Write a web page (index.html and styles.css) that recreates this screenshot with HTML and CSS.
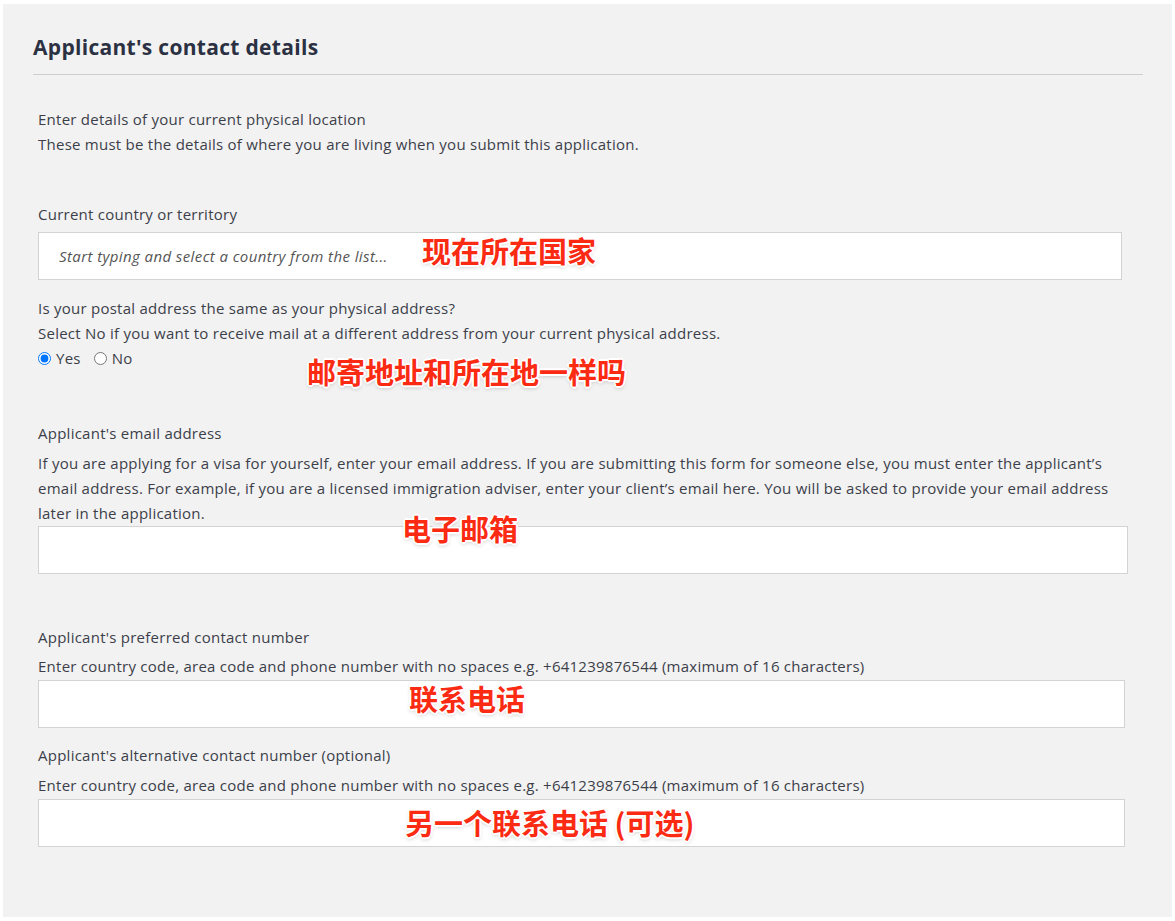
FILE: index.html
```
<!DOCTYPE html>
<html lang="en">
<head>
  <meta charset="UTF-8" />
  <title>Applicant's contact details</title>
  <link rel="stylesheet" href="styles.css">
</head>
<body>
  <div class="panel">
    <h2 class="section-title">Applicant's contact details</h2>

    <div class="form">
      <div class="intro">
        <p>Enter details of your current physical location</p>
        <p>These must be the details of where you are living when you submit this application.</p>
      </div>

      <div class="field field-country">
        <label>Current country or territory</label>
        <input type="text" class="text-input w-country" placeholder="Start typing and select a country from the list..." />
      </div>

      <div class="field field-postal">
        <label>Is your postal address the same as your physical address?</label>
        <p class="hint tight">Select No if you want to receive mail at a different address from your current physical address.</p>
        <div class="radios">
          <label class="radio"><input type="radio" name="postal" checked /> Yes</label>
          <label class="radio"><input type="radio" name="postal" /> No</label>
        </div>
      </div>

      <div class="field field-email">
        <label>Applicant's email address</label>
        <p class="hint">If you are applying for a visa for yourself, enter your email address. If you are submitting this form for someone else, you must enter the applicant’s email address. For example, if you are a licensed immigration adviser, enter your client’s email here. You will be asked to provide your email address later in the application.</p>
        <input type="text" class="text-input w-email" />
      </div>

      <div class="field field-phone">
        <label>Applicant's preferred contact number</label>
        <p class="hint">Enter country code, area code and phone number with no spaces e.g. +641239876544 (maximum of 16 characters)</p>
        <input type="text" class="text-input w-phone" />
      </div>

      <div class="field field-alt">
        <label>Applicant's alternative contact number (optional)</label>
        <p class="hint">Enter country code, area code and phone number with no spaces e.g. +641239876544 (maximum of 16 characters)</p>
        <input type="text" class="text-input w-phone" />
      </div>
    </div>

    <!-- annotations drawn over the form -->
    <span class="note note-country">现在所在国家</span>
    <span class="note note-postal">邮寄地址和所在地一样吗</span>
    <span class="note note-email">电子邮箱</span>
    <span class="note note-phone">联系电话</span>
    <span class="note note-alt">另一个联系电话 (可选)</span>
  </div>
</body>
</html>
```

FILE: styles.css
```
* {
  margin: 0;
  padding: 0;
  box-sizing: border-box;
}
body {
  background: #fff;
  font-family: 'Open Sans', 'Noto Sans', sans-serif;
  color: #3c3f4a;
}
.panel {
  position: relative;
  margin: 4px 3px 0 3px;
  height: 913px;
  background: #f2f2f2;
  padding: 0 29px 0 30px;
}
.section-title {
  padding-top: 31px;
  padding-bottom: 15px;
  font-size: 21px;
  line-height: 24px;
  font-weight: 700;
  letter-spacing: 0.3px;
  color: #2b3142;
  border-bottom: 1px solid #cdcdcd;
}
.form {
  padding-left: 5px;
  font-size: 15px;
  line-height: 25px;
  letter-spacing: 0.25px;
}
.intro {
  margin-top: 32px;
}
.field label {
  display: block;
}
.hint {
  margin-top: 5px;
}
.hint.tight {
  margin-top: 0;
}
.field-country {
  margin-top: 45px;
}
.field-country .text-input {
  margin-top: 5px;
}
.field-postal {
  margin-top: 16px;
}
.field-email {
  margin-top: 50px;
}
.field-phone {
  margin-top: 51px;
}
.field-phone .hint {
  margin-top: 4px;
}
.field-alt {
  margin-top: 15px;
}
.text-input {
  display: block;
  height: 48px;
  margin-top: 1px;
  background: #fff;
  border: 1px solid #d3d3d3;
  padding: 0 20px;
  font-family: inherit;
  font-size: 15px;
  letter-spacing: 0.4px;
  color: #333;
  outline: none;
}
.w-email {
  margin-top: 0;
}
.text-input::placeholder {
  font-style: italic;
  color: #555;
}
.w-country {
  width: 1084px;
}
.w-email {
  width: 1090px;
}
.w-phone {
  width: 1087px;
}
.radios {
  display: flex;
  gap: 13px;
}
.field .radio {
  display: flex;
  align-items: center;
  gap: 5px;
}
.radio input {
  margin: 0;
  width: 13px;
  height: 13px;
}
.note {
  position: absolute;
  font-family: 'Noto Sans CJK SC', sans-serif;
  font-size: 29px;
  font-weight: 700;
  line-height: 1;
  color: #fb2a12;
  text-shadow:
    -2px 0 0 #fff, 2px 0 0 #fff, 0 -2px 0 #fff, 0 2px 0 #fff,
    -1px -1px 0 #fff, 1px 1px 0 #fff, -1px 1px 0 #fff, 1px -1px 0 #fff,
    0 2px 4px rgba(0,0,0,0.25);
}
.note-country {
  left: 419px;
  top: 232px;
}
.note-postal {
  left: 304px;
  top: 353px;
}
.note-email {
  left: 399px;
  top: 510px;
}
.note-phone {
  left: 406px;
  top: 680px;
}
.note-alt {
  left: 402px;
  top: 804px;
}
```
